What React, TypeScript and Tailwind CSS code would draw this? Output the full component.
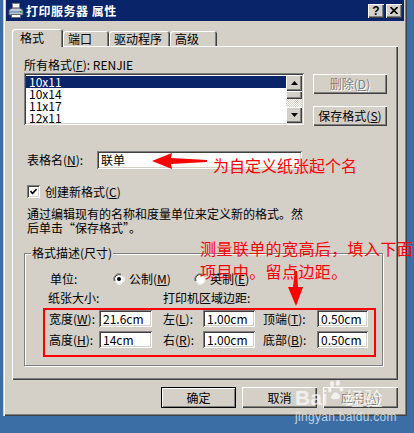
import React from "react";

const F = "font-['Noto_Sans_CJK_SC','Noto_Sans',sans-serif]";
const RAISED = "shadow-[inset_1px_1px_#ffffff,inset_-1px_-1px_#404040,inset_-2px_-2px_#808080]";
const SUNKEN = "shadow-[inset_1px_1px_#808080,inset_-1px_-1px_#ffffff,inset_2px_2px_#404040,inset_-2px_-2px_#d4d0c8]";

function U({ c }: { c: string }) {
  return <span className="underline underline-offset-[1px]">{c}</span>;
}

function Btn({
  children,
  cls,
  disabled,
  def,
}: {
  children: React.ReactNode;
  cls: string;
  disabled?: boolean;
  def?: boolean;
}) {
  return (
    <div
      className={`${cls} flex items-center justify-center bg-[#d4d0c8] ${
        def
          ? "border border-black shadow-[inset_1px_1px_#ffffff,inset_-1px_-1px_#808080]"
          : RAISED
      } ${disabled ? "text-[#808080] [text-shadow:1px_1px_#ffffff]" : "text-black"}`}
    >
      {children}
    </div>
  );
}

function Field({ cls, children }: { cls: string; children: React.ReactNode }) {
  return (
    <div className={`${cls} ${SUNKEN} bg-white flex items-center pl-[4px] text-black`}>
      {children}
    </div>
  );
}

function Radio({ on }: { on?: boolean }) {
  return (
    <svg width="12" height="12" viewBox="0 0 12 12" className="shrink-0">
      <path d="M1 8 A5.5 5.5 0 0 1 8 1" fill="none" stroke="#808080" strokeWidth="1" />
      <circle cx="6" cy="6" r="4.5" fill="#ffffff" />
      <path d="M2 8 A4.5 4.5 0 0 1 8 2" fill="none" stroke="#404040" strokeWidth="1" />
      <path d="M11 4 A5.5 5.5 0 0 1 4 11" fill="none" stroke="#ffffff" strokeWidth="1" />
      {on && <circle cx="6" cy="6" r="2" fill="#000000" />}
    </svg>
  );
}

function PrinterIcon() {
  return (
    <svg width="16" height="16" viewBox="0 0 16 16" className="shrink-0">
      <rect x="4.5" y="0.5" width="7" height="6" fill="#ffffff" stroke="#808080" />
      <path d="M1 7 L4 5 L12 5 L15 7 L15 12 L1 12 Z" fill="#c0c8d8" stroke="#404858" />
      <rect x="2" y="8" width="12" height="2" fill="#8aa0c0" />
      <rect x="3.5" y="11.5" width="9" height="3" fill="#ffffff" stroke="#606878" />
      <rect x="12" y="8" width="1.5" height="1.5" fill="#20a020" />
    </svg>
  );
}

function ScrollArrow({ up }: { up?: boolean }) {
  return (
    <div className={`w-[16px] h-[16px] bg-[#d4d0c8] ${RAISED} flex items-center justify-center`}>
      <svg width="7" height="4" viewBox="0 0 7 4">
        {up ? <path d="M3.5 0 L7 4 L0 4 Z" fill="#000" /> : <path d="M0 0 L7 0 L3.5 4 Z" fill="#000" />}
      </svg>
    </div>
  );
}

function Tab({ label, cls, active }: { label: string; cls: string; active?: boolean }) {
  return (
    <div
      className={`${cls} flex items-center bg-[#d4d0c8] rounded-t-[3px] shadow-[inset_1px_1px_#ffffff,inset_-1px_0_#404040,inset_-2px_0_#808080] ${
        active ? "h-[18px] -mb-[1px] relative z-10 pl-[8px] pb-[1px]" : "h-[15px] pl-[5px]"
      }`}
    >
      {label}
    </div>
  );
}

export default function App() {
  const items = ["10x11", "10x14", "11x17", "12x11"];
  return (
    <div className={`relative w-[414px] h-[433px] overflow-hidden bg-[#3a6ea5] ${F} text-[12px] leading-[12px] text-black`}>
      <div className="ml-[3px] w-[404px] h-[416px] bg-[#d4d0c8] shadow-[inset_1px_0_#d4d0c8,inset_2px_0_#ffffff,inset_-1px_-1px_#404040,inset_-2px_-2px_#808080] flex flex-col">
        {/* Title bar */}
        <div className="mx-[3px] h-[21px] bg-[#0a246a] flex items-center px-[2px]">
          <PrinterIcon />
          <span className="ml-[2px] text-white font-bold text-[12px] leading-[14px] tracking-[0.5px]">打印服务器 属性</span>
          <div className="ml-auto flex gap-[2px]">
            <div className={`w-[16px] h-[14px] bg-[#d4d0c8] ${RAISED} flex items-center justify-center font-['Liberation_Sans',sans-serif] font-bold text-[12px] leading-[12px]`}>
              ?
            </div>
            <div className={`w-[16px] h-[14px] bg-[#d4d0c8] ${RAISED} flex items-center justify-center`}>
              <svg width="8" height="7" viewBox="0 0 8 7">
                <path d="M0.5 0 L7.5 7 M7.5 0 L0.5 7" stroke="#000" strokeWidth="1.6" />
              </svg>
            </div>
          </div>
        </div>

        {/* Tabs */}
        <div className="mt-[8px] ml-[9px] flex items-end h-[17px]">
          <Tab label="格式" cls="w-[51px]" active />
          <Tab label="端口" cls="w-[46px]" />
          <Tab label="驱动程序" cls="w-[61px]" />
          <Tab label="高级" cls="w-[47px]" />
        </div>

        {/* Panel */}
        <div className={`ml-[9px] w-[386px] h-[334px] bg-[#d4d0c8] ${RAISED} pl-[12px] pt-[13px] flex flex-col`}>
          <div className="h-[12px]">
            所有格式(<U c="F" />): RENJIE
          </div>
          <div className="mt-[2px] flex">
            <div className={`w-[280px] h-[52px] bg-white ${SUNKEN} p-[2px] flex`}>
              <div className="flex-1 pt-[1px] overflow-hidden">
                {items.map((t, i) => (
                  <div key={t} className={`h-[12px] pl-[3px] ${i === 0 ? "bg-[#0a246a] text-white" : ""}`}>
                    {t}
                  </div>
                ))}
              </div>
              <div className="w-[16px] flex flex-col">
                <ScrollArrow up />
                <div className={`h-[8px] bg-[#d4d0c8] ${RAISED}`} />
                <div className="h-[8px] bg-[repeating-conic-gradient(#ffffff_0_25%,#d4d0c8_0_50%)] bg-[length:2px_2px]" />
                <ScrollArrow />
              </div>
            </div>
            <div className="ml-[9px] pt-[1px] flex flex-col gap-[12px]">
              <Btn cls="w-[74px] h-[20px]" disabled>
                删除(<U c="D" />)
              </Btn>
              <Btn cls="w-[74px] h-[20px]">
                保存格式(<U c="S" />)
              </Btn>
            </div>
          </div>

          <div className="mt-[25px] flex items-center h-[18px]">
            <span className="ml-[3px] w-[70px]">
              表格名(<U c="N" />):
            </span>
            <Field cls="w-[205px] h-[18px]">联单</Field>
          </div>

          <div className="mt-[16px] flex items-center h-[13px]">
            <div className={`ml-[3px] w-[13px] h-[13px] bg-white ${SUNKEN} flex items-center justify-center`}>
              <svg width="7" height="7" viewBox="0 0 7 7">
                <path d="M0.5 3 L2.5 5.5 L6.5 1" fill="none" stroke="#000" strokeWidth="1.6" />
              </svg>
            </div>
            <span className="ml-[5px]">
              创建新格式(<U c="C" />)
            </span>
          </div>

          <div className="mt-[9px] pl-[3px] leading-[14px]">
            <div>通过编辑现有的名称和度量单位来定义新的格式。然</div>
            <div>后单击“保存格式”。</div>
          </div>

          {/* Group box */}
          <div className="mt-[18px] relative w-[359px] h-[113px] border border-[#808080] shadow-[inset_1px_1px_#ffffff,1px_1px_#ffffff] pl-[18px] pt-[17px] flex flex-col">
            <span className="absolute left-[6px] -top-[7px] px-[1px] bg-[#d4d0c8] leading-[12px]">格式描述(尺寸)</span>
            <div className="pl-[7px] h-[16px] flex items-center">
              <span className="w-[63px]">单位:</span>
              <div className="w-[81px] flex items-center gap-[4px]">
                <Radio on />
                <span>
                  公制(<U c="M" />)
                </span>
              </div>
              <div className="flex items-center gap-[4px]">
                <Radio />
                <span>
                  英制(<U c="E" />)
                </span>
              </div>
            </div>
            <div className="mt-[4px] pl-[5px] h-[14px] flex items-center">
              <span className="w-[115px]">纸张大小:</span>
              <span>打印机区域边距:</span>
            </div>
            <div className="mt-[3px] w-[333px] h-[49px] border-2 border-[#ff0000] pl-[4px] flex flex-col gap-[4px]">
              <div className="flex items-center h-[17px]">
                <span className="w-[50px]">
                  宽度(<U c="W" />):
                </span>
                <Field cls="w-[53px] h-[17px]">21.6cm</Field>
                <span className="ml-[11px] w-[40px]">
                  左(<U c="L" />):
                </span>
                <Field cls="w-[52px] h-[17px]">1.00cm</Field>
                <span className="ml-[8px] w-[54px]">
                  顶端(<U c="T" />):
                </span>
                <Field cls="w-[51px] h-[17px]">0.50cm</Field>
              </div>
              <div className="flex items-center h-[17px]">
                <span className="w-[50px]">
                  高度(<U c="H" />):
                </span>
                <Field cls="w-[53px] h-[17px]">14cm</Field>
                <span className="ml-[11px] w-[40px]">
                  右(<U c="R" />):
                </span>
                <Field cls="w-[52px] h-[17px]">1.00cm</Field>
                <span className="ml-[8px] w-[54px]">
                  底部(<U c="B" />):
                </span>
                <Field cls="w-[51px] h-[17px]">0.50cm</Field>
              </div>
            </div>
          </div>
        </div>

        {/* Bottom buttons */}
        <div className="mt-[7px] self-end mr-[9px] flex gap-[6px]">
          <Btn cls="w-[75px] h-[21px]" def>
            确定
          </Btn>
          <Btn cls="w-[75px] h-[21px]">取消</Btn>
          <Btn cls="w-[75px] h-[21px]" disabled>
            应用(<U c="A" />)
          </Btn>
        </div>
      </div>

      {/* Red annotations */}
      <svg className="absolute left-[152px] top-[152px]" width="56" height="18" viewBox="0 0 56 18">
        <path d="M0 9 L20 1 L19 6 L55 8 L55 10 L19 12 L20 17 Z" fill="#ff0000" />
      </svg>
      <div className="absolute left-[213px] top-[155px] text-[16px] leading-[20px] text-[#ff0000] whitespace-nowrap">
        为自定义纸张起个名
      </div>
      <div className="absolute left-[200px] top-[237px] text-[16px] leading-[23px] tracking-[0.4px] text-[#ff0000] whitespace-nowrap">
        <div>测量联单的宽高后，填入下面</div>
        <div>项目中。留点边距。</div>
      </div>
      <svg className="absolute left-[287px] top-[271px]" width="17" height="36" viewBox="0 0 17 36">
        <path d="M8 0 L10 0 L11 16 L16 16 L9 35 L1 16 L6 16 Z" fill="#ff0000" />
      </svg>

      {/* Watermark */}
      <div className="absolute left-[295px] top-[380px] text-white/70 pointer-events-none">
        <div className="flex items-end h-[28px]">
          <span className="font-['Liberation_Sans',sans-serif] font-bold text-[21px] leading-[21px]">Bai</span>
          <svg width="16" height="22" viewBox="0 0 16 22" className="self-start">
            <ellipse cx="4" cy="4" rx="2" ry="3" fill="currentColor" />
            <ellipse cx="10" cy="3" rx="2" ry="3" fill="currentColor" />
            <ellipse cx="1.8" cy="10" rx="1.8" ry="2.5" fill="currentColor" />
            <ellipse cx="13.5" cy="9" rx="2" ry="2.5" fill="currentColor" />
            <path d="M3 17 Q7 8 12 16 Q12 20 7.5 19 Q3 20 3 17 Z" fill="currentColor" />
          </svg>
          <span className="text-[19px] leading-[21px] ml-[1px]">经验</span>
        </div>
        <div className="mt-[2px] font-['Liberation_Sans',sans-serif] text-[12px] leading-[14px] tracking-[0.3px]">
          jingyan.baidu.com
        </div>
      </div>
    </div>
  );
}
